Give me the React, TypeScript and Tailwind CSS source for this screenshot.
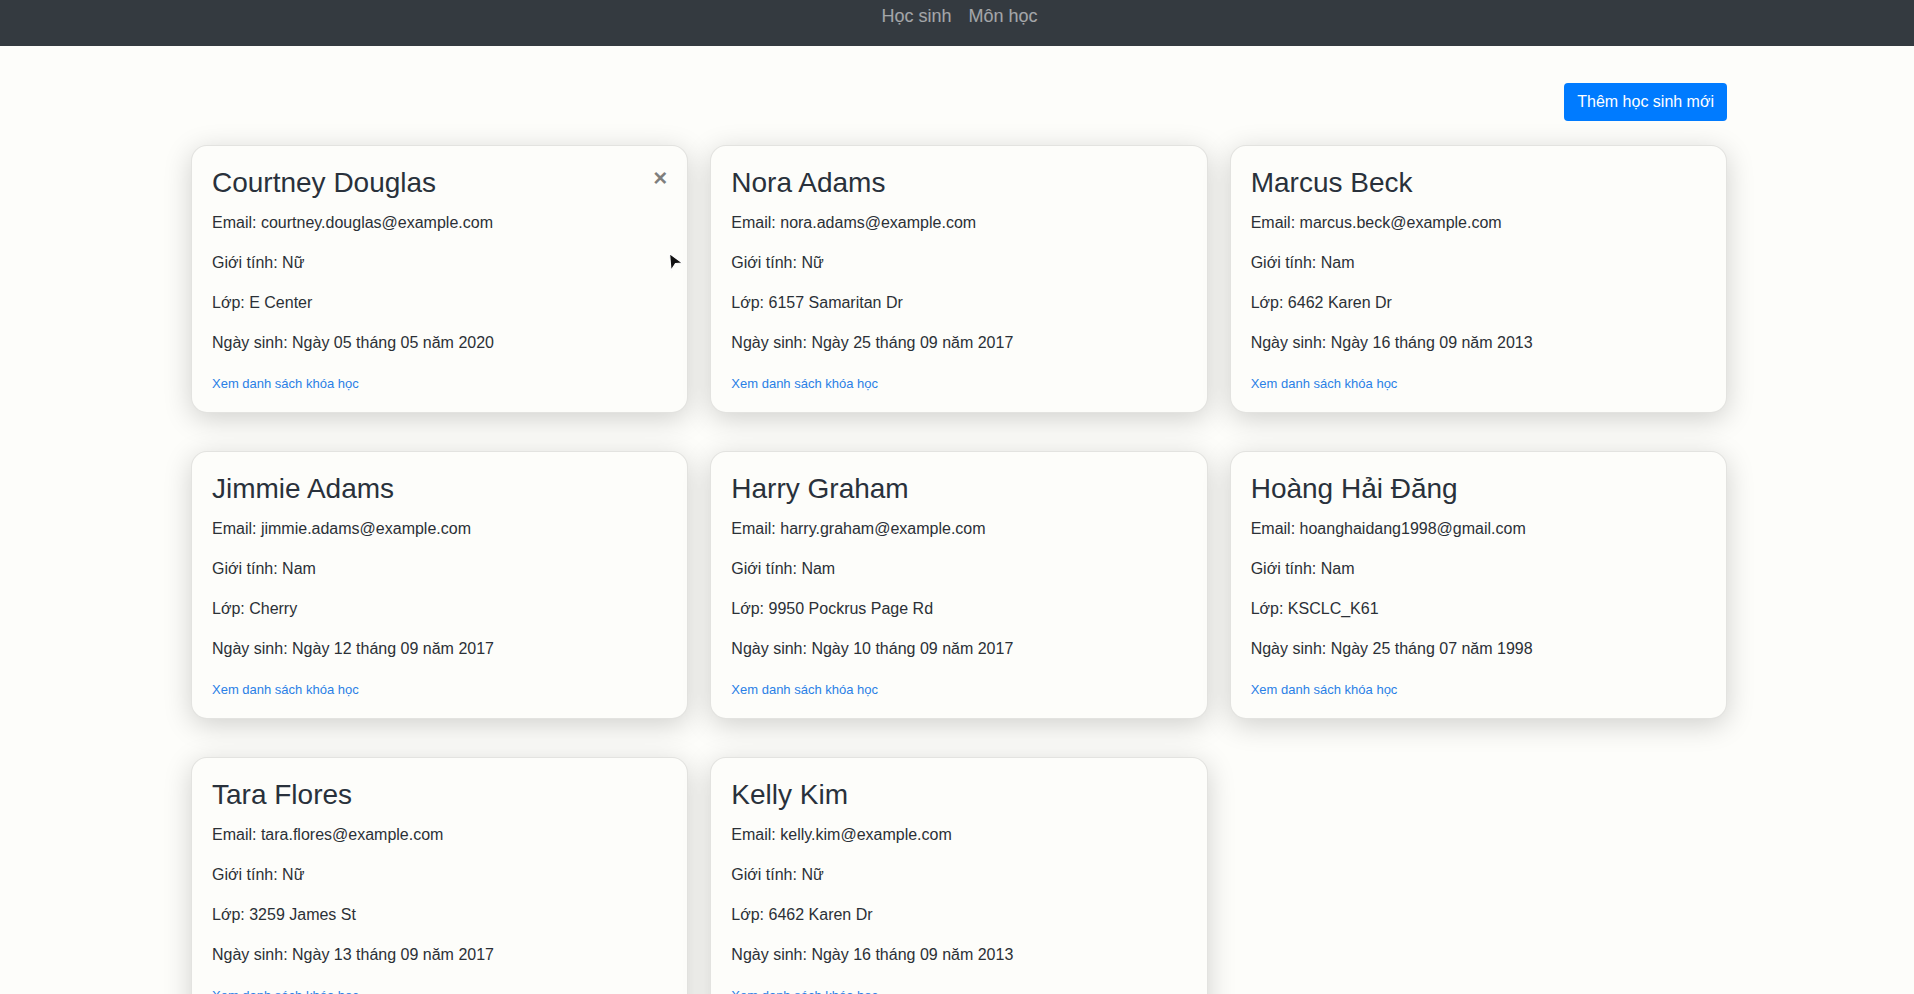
import React from "react"

type Student = {
  name: string
  email: string
  gender: string
  className: string
  birthday: string
}

const students: Student[] = [
  { name: "Courtney Douglas", email: "courtney.douglas@example.com", gender: "Nữ", className: "E Center", birthday: "Ngày 05 tháng 05 năm 2020" },
  { name: "Nora Adams", email: "nora.adams@example.com", gender: "Nữ", className: "6157 Samaritan Dr", birthday: "Ngày 25 tháng 09 năm 2017" },
  { name: "Marcus Beck", email: "marcus.beck@example.com", gender: "Nam", className: "6462 Karen Dr", birthday: "Ngày 16 tháng 09 năm 2013" },
  { name: "Jimmie Adams", email: "jimmie.adams@example.com", gender: "Nam", className: "Cherry", birthday: "Ngày 12 tháng 09 năm 2017" },
  { name: "Harry Graham", email: "harry.graham@example.com", gender: "Nam", className: "9950 Pockrus Page Rd", birthday: "Ngày 10 tháng 09 năm 2017" },
  { name: "Hoàng Hải Đăng", email: "hoanghaidang1998@gmail.com", gender: "Nam", className: "KSCLC_K61", birthday: "Ngày 25 tháng 07 năm 1998" },
  { name: "Tara Flores", email: "tara.flores@example.com", gender: "Nữ", className: "3259 James St", birthday: "Ngày 13 tháng 09 năm 2017" },
  { name: "Kelly Kim", email: "kelly.kim@example.com", gender: "Nữ", className: "6462 Karen Dr", birthday: "Ngày 16 tháng 09 năm 2013" },
]

function StudentCard({ student, hovered }: { student: Student; hovered?: boolean }) {
  return (
    <div className="relative rounded-2xl border border-black/10 bg-[#fdfdfa] shadow-[0_6px_28px_rgba(0,0,0,0.18)]">
      <div className="px-5 pt-5 pb-[19px]">
        {hovered && (
          <button className="float-right text-[24px] leading-none font-bold text-black/50">
            ×
          </button>
        )}
        <h3 className="mb-[11px] text-[28px] leading-[1.2] text-[#29313b]">
          {student.name}
        </h3>
        <p className="mb-4 leading-6">Email: {student.email}</p>
        <p className="mb-4 leading-6">Giới tính: {student.gender}</p>
        <p className="mb-4 leading-6">Lớp: {student.className}</p>
        <p className="mb-[19px] leading-6">Ngày sinh: {student.birthday}</p>
        <a href="#" className="block text-[13px] leading-[19.5px] text-[#2a80e6]">
          Xem danh sách khóa học
        </a>
      </div>

      {/* con trỏ chuột trong ảnh */}
      {hovered && (
        <svg
          className="absolute left-[476px] top-[106px]"
          width="16"
          height="20"
          viewBox="0 0 16 20"
        >
          <path d="M1.5 1.5 L14.5 11 L7.5 11.5 L3 18.5 Z" fill="#111" stroke="#fff" strokeWidth="1.2" strokeLinejoin="round" />
        </svg>
      )}
    </div>
  )
}

export default function App() {
  return (
    <div className="min-h-screen bg-[#fdfdfa] text-[16px] text-[#2b3036] font-['Liberation_Sans',Arial,sans-serif]">
      {/* =========================
          NAVBAR
         ========================= */}
      <nav className="flex h-[46px] justify-center gap-[17px] bg-[#343a40] pt-[3px] pl-[5px] text-[18px] leading-[27px]">
        <a href="#" className="text-white/55">Học sinh</a>
        <a href="#" className="text-white/55">Môn học</a>
      </nav>

      <div className="ml-[191px] w-[1536px] pb-10">
        <div className="mt-[37px] mb-[24px] flex justify-end">
          <button className="h-[38px] rounded bg-[#007bff] px-[13px] text-[16px] text-white">
            Thêm học sinh mới
          </button>
        </div>

        <div className="grid grid-cols-3 gap-x-[22px] gap-y-[38px]">
          {students.map((s, i) => (
            <StudentCard key={s.email} student={s} hovered={i === 0} />
          ))}
        </div>
      </div>
    </div>
  )
}
